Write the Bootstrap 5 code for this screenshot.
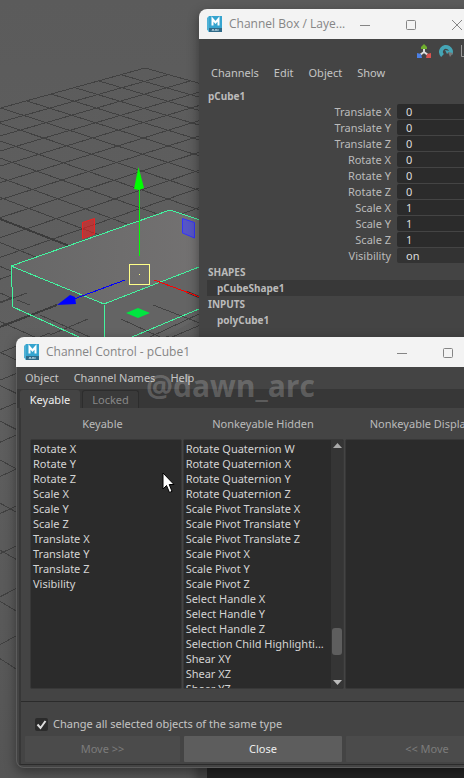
<!DOCTYPE html>
<html lang="en" class="h-100">
<head>
<meta charset="utf-8">
<meta name="viewport" content="width=device-width, initial-scale=1">
<title>Channel Control - pCube1</title>
<link href="https://cdn.jsdelivr.net/npm/bootstrap@5.3.0/dist/css/bootstrap.min.css" rel="stylesheet">
<style>
body{font:11px/16px "Noto Sans","Open Sans",sans-serif;color:#c4c4c4;background:#5d5d5d}
.desk{min-height:100vh;background:linear-gradient(#5b5b5b,#606060 45%,#555)}
.scene{position:absolute;inset:0;width:100%;height:100%}
.win{position:absolute;background:#444;border-radius:8px;box-shadow:0 4px 12px rgba(0,0,0,.4)}
.win-channels{left:199px;right:-16px;top:9px;bottom:-20px}
.win-control{left:16px;right:-53px;top:337px;box-shadow:inset 0 0 0 1px #5c5c5c,0 4px 12px rgba(0,0,0,.4)}
.titlebar{height:30px;background:#f3f3f3;color:#858585;border-radius:8px 8px 0 0;font-family:"Open Sans",sans-serif;font-size:12px;gap:6px;white-space:nowrap}
.app-icon{flex:none}
.caption{flex:1 1 0;min-width:0}
.wbtn{width:46px;height:30px}
.plain{border:0;background:none;color:inherit;padding:0;display:block}
.toolbar-row{height:24px;padding-right:1px}
.menu-a{gap:15px;height:20px;padding-left:12px}
.menu-b{gap:15px;height:22px;padding-left:9px}
.object-name{padding:5px 0 0 9px}
.attr{display:grid;grid-template-columns:192px 1fr;column-gap:6px;height:15px;margin-bottom:1px;line-height:15px}
.attr label{text-align:right;color:#bbb}
.attr input{border:0;background:#2b2b2b;color:#ddd;padding:0 9px;min-width:0;height:15px;border-radius:2px 0 0 2px;font-size:11px}
.attr input.soft{background:#333}
.nodes{font-weight:700;font-size:10px;color:#bbb}
.nodes div,.nodes button{height:16px;line-height:16px;font-weight:700;text-align:left}
.group-name{padding-left:9px}
.indent{margin-left:8px;padding-left:10px}
.sel{background:#383838}
.layers{background:#232323;margin-left:8px}
.tabs{background:#373737;height:19px;padding:1px 0 0 3px;gap:2px;margin-left:1px}
.tab{height:18px;border-radius:3px 3px 0 0;line-height:17px}
.tab-on{background:#444;color:#eee;width:60px}
.tab-off{border:1px solid #2d2d2d;border-bottom:0;color:#888;width:57px;background:#3a3a3a}
.pane{border-left:2px solid #373737;border-bottom:1px solid #2b2b2b;margin:0 0 3px 3px}
.cols{display:grid;grid-template-columns:155fr 158fr 162fr;column-gap:4px;padding:0 9px 0 4px}
.heads{height:31px;align-items:center;text-align:center;color:#bbb}
.lists{display:grid;grid-template-columns:151fr 161fr 160fr;column-gap:1px;padding:0 11px 0 9px;height:250px}
.lbox{background:#2b2b2b;border:1px solid #383838;border-radius:2px;overflow:hidden;min-height:0}
.lbox ul{padding:1px 4px 0 2px;line-height:15px;min-width:0;color:#d4d4d4}
.sbar{width:12px;background:#353535;padding:3px 1px;flex-shrink:0}
.thumb{height:27px;background:#5e5e5e;border-radius:3px;width:10px}
.g-up{flex:173 0 0}.g-down{flex:24 0 0}
.rule{height:1px;background:#2b2b2b;margin-top:12px}
.check-row{gap:5px;padding:14px 0 4px 14px;height:34px}
.tick{appearance:none;width:13px;height:13px;margin:0;border-radius:2px;background:#2b2b2b url("data:image/svg+xml,%3Csvg xmlns='http://www.w3.org/2000/svg' viewBox='0 0 13 13'%3E%3Cpath d='M2.5 6.5l3 3.5L10.500 3' fill='none' stroke='%23ddd' stroke-width='2'/%3E%3C/svg%3E")}
.act{height:26px;border:0;background:#5d5d5d;color:#eee;border-radius:1px;padding:0}
.act:disabled{background:#4b4b4b;color:#7c7c7c}
.acts{padding-bottom:2px}
.stamp{position:absolute;left:146px;top:366px;font:700 30px/40px "Open Sans","Noto Sans",sans-serif;color:rgba(255,255,255,.2);pointer-events:none}
.pointer{position:absolute;left:162px;top:472px}
</style>
<script src="https://cdn.jsdelivr.net/npm/bootstrap@5.3.0/dist/js/bootstrap.bundle.min.js"></script>
</head>
<body class="h-100 overflow-hidden">
<svg width="0" height="0" class="position-absolute" aria-hidden="true">
 <symbol id="maya" viewBox="0 0 16 17"><path d="M1 1h3v15H1z" fill="#7fcbe6"/><path d="M0 2l2-2v15l-2-1z" fill="#4fb0d4"/><path d="M2 0h13v12H2z" fill="#36a4cf"/><path d="M2 12h13v4H2z" fill="#2f6a88"/><path d="M5.500 9.500V3L8.500 6.500L11.500 3V9.500" fill="none" stroke="#fff" stroke-width="2"/><path d="M5 15l1-2 1 2m1 0l1-2 1 2m1-2v2" fill="none" stroke="#cfe6f0" stroke-width=".8"/></symbol>
 <symbol id="min" viewBox="0 0 10 10"><path d="M0 5.500h10" stroke="#858585"/></symbol>
 <symbol id="max" viewBox="0 0 10 10"><rect x=".5" y=".5" width="9" height="9" rx="1" fill="none" stroke="#858585"/></symbol>
 <symbol id="cls" viewBox="0 0 10 10"><path d="M0 0l10 10M10 0L0 10" stroke="#858585"/></symbol>
</svg>
<main class="desk position-relative h-100 overflow-hidden">
 <svg class="scene" aria-label="Perspective view">
  <defs><linearGradient id="topface" x1="0" x2="1"><stop offset="0" stop-color="#676767"/><stop offset="1" stop-color="#757373"/></linearGradient></defs>
  <g id="gridback" stroke="#414141" shape-rendering="crispEdges"></g>
  <path d="M12 266L104 304L105 371L13 307z" fill="#606060"/><path d="M104 304L230 255V300L105 371z" fill="#646464"/>
  <g shape-rendering="crispEdges" stroke="#424242"><path d="M27 293L0 303M88 319L50 335M40 315L92 338M121 319L160 337M153 305L205 325M199 314L150 337M17 300L30 305"/><path d="M0 327L57 305" stroke="#3b3b3b" stroke-width="2"/></g>
  <path d="M11 266L170 210L230 230V255L104 304z" fill="url(#topface)"/>
  <g fill="none" stroke="#43f5a0" shape-rendering="crispEdges"><path d="M230 230L170 210L11 266L104 304L230 255M11 266L13 307L90 342M104 304L105 342M120 342L230 296"/></g>
  <path d="M187 292L199 297" stroke="#333" stroke-width="2"/>
  <path d="M82.500 222.500L94.500 218.500V234L82.500 238.500z" fill="#f02020" fill-opacity=".6" stroke="#e22"/>
  <path d="M182.500 218.500L194.500 222.500V238L182.500 233z" fill="#4444ff" fill-opacity=".6" stroke="#33f"/>
  <path d="M126 313L138 308L150 313L138 318z" fill="#00e640"/>
  <path d="M139.500 188V256" stroke="#0f0"/><path d="M138.500 167L134 189L139 190L144 188z" fill="#0f0"/>
  <path d="M125 280L74 299" stroke="#00f" shape-rendering="crispEdges"/><path d="M57 305L70 295L75 297L76 304z" fill="#00f"/>
  <path d="M154 280L200 297" stroke="#f00" shape-rendering="crispEdges"/>
  <rect x="129.500" y="264.500" width="20" height="20" fill="none" stroke="#ff8"/><path d="M139 274h1v1h-1z" fill="#ff8"/>
 </svg>

 <section class="win win-channels d-flex flex-column">
  <header class="titlebar d-flex align-items-center ps-2"><svg width="16" height="17" class="app-icon"><use href="#maya"/></svg><span class="caption">Channel Box / Laye...</span>
   <div class="d-flex"><button class="plain wbtn" aria-label="Minimize"><svg width="10" height="10"><use href="#min"/></svg></button><button class="plain wbtn" aria-label="Maximize"><svg width="10" height="10"><use href="#max"/></svg></button><button class="plain wbtn" aria-label="Close window"><svg width="10" height="10"><use href="#cls"/></svg></button></div>
  </header>
  <div class="toolbar-row d-flex justify-content-end align-items-center gap-2">
   <button class="plain" aria-label="Manipulators"><svg width="14" height="14" class="d-block"><path d="M7 4v5M7 8l-4 3M7 8l4 3" stroke="#ddd" stroke-width="2"/><path d="M7 0l3 3v2H4V3z" fill="#6fae2e"/><path d="M0 9l4 1 1 4H0z" fill="#4c80e6"/><path d="M14 9l-4 1-1 4h5z" fill="#d9534f"/></svg></button>
   <button class="plain" aria-label="Speed"><svg width="14" height="14" class="d-block"><path d="M3.500 11.500A5 5 0 1 1 11.500 10" fill="none" stroke="#45a5b5" stroke-width="4"/><path d="M6 6l5 1-3 3z" fill="#45a5b5"/><path d="M9 8l5 1-3 4z" fill="#777"/></svg></button>
   <button class="plain" aria-label="Graph"><svg width="18" height="14" class="d-block"><path d="M.5 1v11.500H16" fill="none" stroke="#999"/><path d="M3 11Q7 10 9 6t7-4" fill="none" stroke="#45a5b5" stroke-width="2"/></svg></button>
  </div>
  <nav class="menu-a d-flex align-items-center"><button class="plain">Channels</button><button class="plain">Edit</button><button class="plain">Object</button><button class="plain">Show</button></nav>
  <div class="nodes object-name"><button class="plain">pCube1</button></div>
  <form id="attrs"></form>
  <div class="nodes"><div class="group-name">SHAPES</div><div class="indent sel">pCubeShape1</div><div class="group-name">INPUTS</div><div class="indent">polyCube1</div></div>
  <div class="layers flex-grow-1 mt-3"></div>
 </section>

 <section class="win win-control">
  <header class="titlebar d-flex align-items-center ps-2"><svg width="16" height="17" class="app-icon"><use href="#maya"/></svg><span class="caption">Channel Control - pCube1</span>
   <div class="d-flex"><button class="plain wbtn" aria-label="Minimize"><svg width="10" height="10"><use href="#min"/></svg></button><button class="plain wbtn" aria-label="Maximize"><svg width="10" height="10"><use href="#max"/></svg></button><button class="plain wbtn" aria-label="Close window"><svg width="10" height="10"><use href="#cls"/></svg></button></div>
  </header>
  <nav class="menu-b d-flex align-items-center"><button class="plain">Object</button><button class="plain">Channel Names</button><button class="plain">Help</button></nav>
  <div class="tabs d-flex"><button class="plain tab tab-on">Keyable</button><button class="plain tab tab-off">Locked</button></div>
  <div class="pane">
   <div class="cols heads"><span>Keyable</span><span>Nonkeyable Hidden</span><span>Nonkeyable Displayed</span></div>
   <div class="lists">
    <div class="lbox"><ul id="keyable" class="list-unstyled m-0"></ul></div>
    <div class="lbox d-flex"><ul id="hidden" class="list-unstyled m-0 flex-grow-1"></ul>
     <div class="sbar d-flex flex-column align-items-center"><svg width="9" height="5"><path d="M4.500 0L9 5H0z" fill="#aaa"/></svg><div class="g-up"></div><div class="thumb"></div><div class="g-down"></div><svg width="9" height="5"><path d="M4.500 5L9 0H0z" fill="#bbb"/></svg></div></div>
    <div class="lbox"></div>
   </div>
   <div class="rule"></div>
   <div class="check-row d-flex align-items-center"><input class="tick" type="checkbox" id="same" checked><label for="same">Change all selected objects of the same type</label></div>
   <div class="cols acts"><button class="act" disabled>Move &gt;&gt;</button><button class="act">Close</button><button class="act" disabled>&lt;&lt; Move</button></div>
  </div>
 </section>
 <div class="stamp">@dawn_arc</div>
 <svg class="pointer" width="14" height="22"><path d="M1 1V17L4.500 13.500L7.500 20.500L10 19.300L7.200 12.500H12z" fill="#fff" stroke="#000"/></svg>
</main>
<script>
// Ground grid: 24 x 24 cells seen in perspective
const project = (i, j) => { const w = 1 - .01165 * (i + j); return [(145 + 20.26 * i - 24 * j) / w, (68.4 + 5.36 * (i + j)) / w]; };
const seg = (a, b, k) => `<path d="M${a.map(Math.round)}L${b.map(Math.round)}"${k === 12 ? ' stroke="#3b3b3b" stroke-width="2"' : ''}/>`;
let lines = '';
for (let k = 0; k <= 24; k++) lines += seg(project(0, k), project(24, k), k) + seg(project(k, 0), project(k, 24), k === 12 ? 0 : k);
document.getElementById('gridback').innerHTML = lines;
const attrs = [['Translate X', 0], ['Translate Y', 0], ['Translate Z', 0], ['Rotate X', 0], ['Rotate Y', 0], ['Rotate Z', 0], ['Scale X', 1], ['Scale Y', 1], ['Scale Z', 1], ['Visibility', 'on']];
document.getElementById('attrs').innerHTML = attrs.map(([n, v], i) => `<div class="attr"><label for="a${i}">${n}</label><input id="a${i}" value="${v}"${v === 'on' ? ' class="soft"' : ''}></div>`).join('');
const fill = (id, a) => document.getElementById(id).innerHTML = a.map(t => `<li class="text-nowrap">${t}</li>`).join('');
fill('keyable', ['Rotate X', 'Rotate Y', 'Rotate Z', 'Scale X', 'Scale Y', 'Scale Z', 'Translate X', 'Translate Y', 'Translate Z', 'Visibility']);
fill('hidden', ['Rotate Quaternion W', 'Rotate Quaternion X', 'Rotate Quaternion Y', 'Rotate Quaternion Z', 'Scale Pivot Translate X', 'Scale Pivot Translate Y', 'Scale Pivot Translate Z', 'Scale Pivot X', 'Scale Pivot Y', 'Scale Pivot Z', 'Select Handle X', 'Select Handle Y', 'Select Handle Z', 'Selection Child Highlighti...', 'Shear XY', 'Shear XZ', 'Shear YZ']);
</script>
</body>
</html>
